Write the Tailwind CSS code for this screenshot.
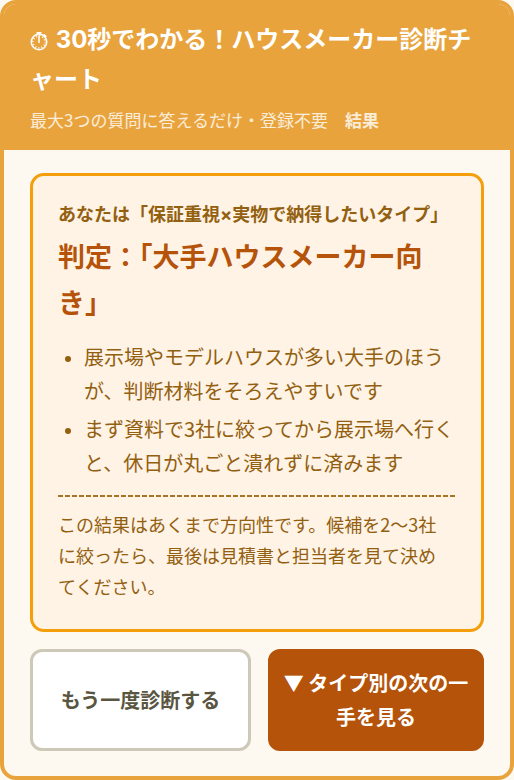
<!DOCTYPE html>
<html lang="ja">
<head>
<meta charset="utf-8">
<meta name="viewport" content="width=device-width, initial-scale=1">
<title>ハウスメーカー診断チャート</title>
<script src="https://cdn.jsdelivr.net/npm/@tailwindcss/browser@4"></script>
</head>
<body class="bg-[#fdf8f0] font-['Noto_Sans_CJK_JP',sans-serif]">
<main class="overflow-hidden rounded-2xl border-4 border-[#e8a33d] bg-[#fdf8f0]">
  <header class="bg-[#e8a33d] px-[26px] py-4 text-white">
    <h1 class="font-[Inter,'Noto_Sans_CJK_JP',sans-serif] text-2xl leading-10 font-bold">
      <svg class="mr-0.5 inline-block h-5 w-[18px] align-[-3px]" viewBox="0 0 18 20" fill="none" stroke="currentColor" role="img" aria-label="ストップウォッチ">
        <circle cx="9" cy="11" r="7.7" stroke-width="1.6"/>
        <circle cx="9" cy="11" r="6" stroke-width="1.8" stroke-dasharray="1 2.14" stroke-dashoffset="0.5"/>
        <path d="M9 5.5v6" stroke-width="1.5" stroke-linecap="round"/>
        <path d="M7.2 1.9h3.6M9 1.9v1.6M14.2 3.8l1.6 1.5" stroke-width="1.7" stroke-linecap="round"/>
      </svg>
      30秒でわかる！ハウスメーカー診断チャート
    </h1>
    <p class="mt-1.5 text-[17px] leading-7 text-white/80">最大3つの質問に答えるだけ・登録不要　<strong class="font-bold">結果</strong></p>
  </header>
  <div class="px-[26px] pt-[23px] pb-[25px]">
    <section class="rounded-[14px] border-3 border-[#f59e0b] bg-[#fff3e6] px-[25px] pt-[23px] pb-[27px] text-[#92600f]">
      <p class="font-[Inter,'Noto_Sans_CJK_JP',sans-serif] text-lg leading-8 font-bold">あなたは「保証重視×実物で納得したいタイプ」</p>
      <h2 class="mt-0.5 text-[27px] leading-[46px] font-bold text-[#b45309]">判定：「大手ハウスメーカー向き」</h2>
      <ul class="mt-4 list-disc space-y-1 pl-[26px] font-[Inter,'Noto_Sans_CJK_JP',sans-serif] text-xl leading-[34px]">
        <li><span class="font-['Noto_Sans_CJK_JP'] leading-none">展示場やモデルハウスが多い大手のほうが、判断材料をそろえやすいです</span></li>
        <li><span class="font-['Noto_Sans_CJK_JP'] leading-none">まず資料で3社に絞ってから展示場へ行くと、休日が丸ごと潰れずに済みます</span></li>
      </ul>
      <hr class="mt-3.5 h-0.5 border-0 bg-[repeating-linear-gradient(90deg,#a87424_0_5px,transparent_5px_7px)]">
      <p class="pt-3 pr-1 text-lg leading-[31px]">この結果はあくまで方向性です。候補を2〜3社に絞ったら、最後は見積書と担当者を見て決めてください。</p>
    </section>
    <div class="mt-[17px] grid grid-cols-[221fr_216fr] gap-[17px]">
      <button type="button" class="rounded-xl border-3 border-[#cdc8b8] bg-white px-3 py-3.5 text-xl leading-[34px] font-bold text-[#5a5540]">もう一度診断する</button>
      <button type="button" class="rounded-xl border-3 border-[#b45309] bg-[#b45309] px-2 py-3.5 text-xl leading-[34px] font-bold text-white">▼ タイプ別の次の一手を見る</button>
    </div>
  </div>
</main>
</body>
</html>
